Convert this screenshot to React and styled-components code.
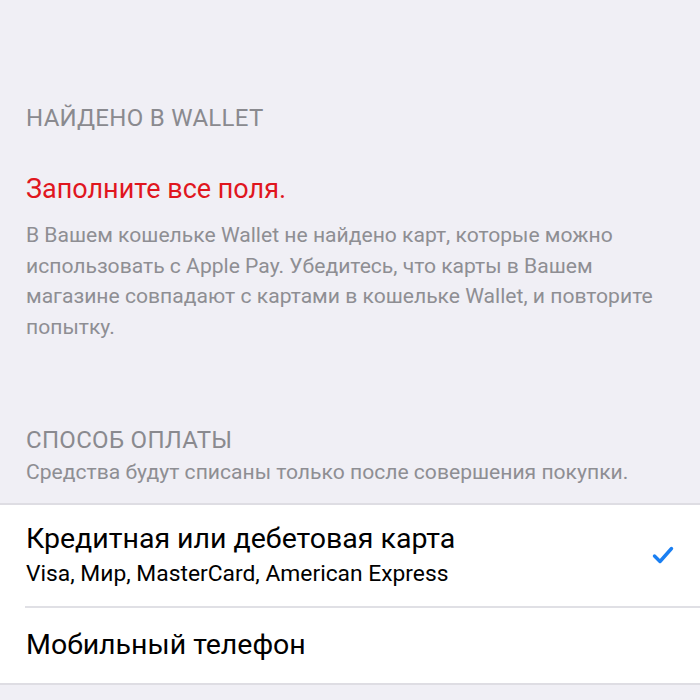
import React from "react";
import styled, { createGlobalStyle } from "styled-components";

const Global = createGlobalStyle`
  html, body { margin: 0; padding: 0; background: #f0eff5; }
  body { font-family: Roboto, "Noto Sans", "Liberation Sans", sans-serif; -webkit-font-smoothing: antialiased; }
`;

const Page = styled.div`
  width: 700px;
  height: 700px;
  overflow: hidden;
  background: #f0eff5;
  display: flex;
  flex-direction: column;
`;

const Section = styled.section`
  padding: ${(p) => p.$pad};
  display: flex;
  flex-direction: column;
`;

const Header = styled.div`
  font-size: 24px;
  line-height: 30px;
  color: #8a8a8f;
  letter-spacing: 0.3px;
  text-transform: uppercase;
`;

const Error = styled.div`
  font-size: 27px;
  line-height: 32px;
  color: #e0161e;
  margin-top: ${(p) => p.$mt || 0}px;
`;

const Note = styled.p`
  margin: ${(p) => p.$mt || 0}px 0 0;
  font-size: 21.1px;
  line-height: 30.5px;
  color: #8e8e93;
`;

const List = styled.div`
  background: #fff;
  border-top: 2px solid #dedde3;
  border-bottom: 2px solid #dedde3;
  display: flex;
  flex-direction: column;
`;

const Row = styled.div`
  height: ${(p) => p.$h}px;
  display: flex;
  align-items: center;
  padding: 0 26px;
`;

const Divider = styled.div`
  height: 2px;
  margin-left: 25px;
  background: #e0e0e5;
`;

const RowText = styled.div`
  flex: 1;
  display: flex;
  flex-direction: column;
`;

const Title = styled.div`
  font-size: 28.5px;
  line-height: 34px;
  color: #000;
`;

const Sub = styled.div`
  font-size: 22.8px;
  line-height: 28px;
  color: #000;
  margin-top: 4px;
`;

const Check = () => (
  <svg width="22" height="18" viewBox="0 0 22 18">
    <path d="M2.5 10 L8 15.5 L19.5 2.5" fill="none" stroke="#1a7ff2" strokeWidth="3.4" strokeLinecap="round" strokeLinejoin="round" />
  </svg>
);

export default function App() {
  return (
    <Page>
      <Global />
      <Section $pad="103px 26px 0">
        <Header>Найдено в Wallet</Header>
        <Error $mt={40}>Заполните все поля.</Error>
        <Note $mt={15}>
          В Вашем кошельке Wallet не найдено карт, которые можно использовать с Apple Pay. Убедитесь, что карты в Вашем магазине совпадают с картами в кошельке Wallet, и повторите попытку.
        </Note>
      </Section>
      <Section $pad="83px 26px 15px">
        <Header>Способ оплаты</Header>
        <Note $mt={2}>Средства будут списаны только после совершения покупки.</Note>
      </Section>
      <List>
        <Row $h={101}>
          <RowText>
            <Title>Кредитная или дебетовая карта</Title>
            <Sub>Visa, Мир, MasterCard, American Express</Sub>
          </RowText>
          <Check />
        </Row>
        <Divider />
        <Row $h={75}>
          <RowText>
            <Title>Мобильный телефон</Title>
          </RowText>
        </Row>
      </List>
    </Page>
  );
}
